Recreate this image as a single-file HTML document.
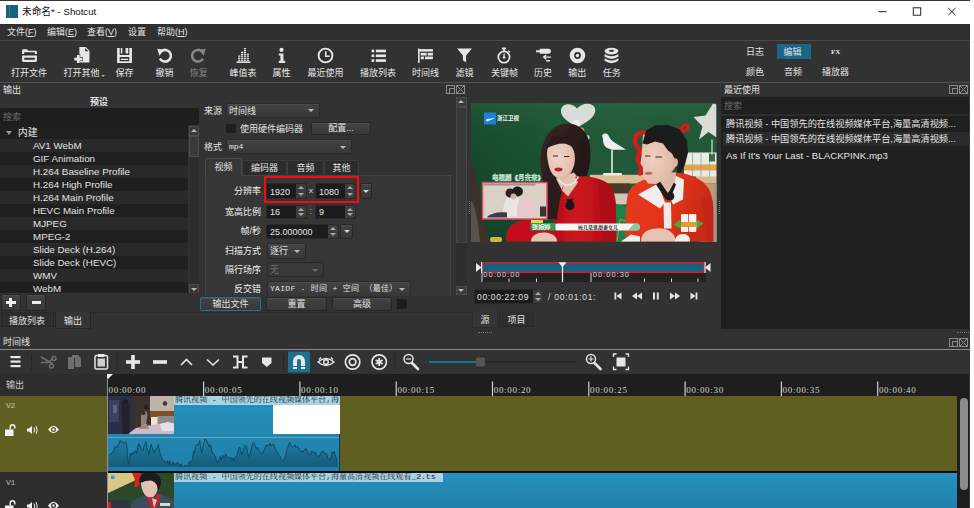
<!DOCTYPE html>
<html lang="zh-CN">
<head>
<meta charset="utf-8">
<title>未命名* - Shotcut</title>
<style>
*{box-sizing:border-box;margin:0;padding:0}
html,body{width:974px;height:508px;overflow:hidden;background:#323232}
body{position:relative;font-family:"Liberation Sans","Noto Sans CJK SC",sans-serif;font-size:9px;color:#e2e2e2;line-height:12px}
.a{position:absolute;white-space:nowrap}
.t{position:absolute;white-space:nowrap;line-height:12px}
.mono{font-family:"Liberation Mono","Noto Sans CJK SC",monospace}
.serif{font-family:"Liberation Serif","Noto Serif CJK SC",serif}
.lab{font-family:"Liberation Mono","Noto Serif CJK SC",serif;font-size:8.1px;color:#1a2a30;letter-spacing:-.05px}
.c{text-align:center}
.r{text-align:right}
.combo{position:absolute;background:linear-gradient(#434343,#373737);border:1px solid #2a2a2a;border-radius:2px;box-shadow:inset 0 1px 0 #4a4a4a}
.combo i{position:absolute;right:5px;top:50%;margin-top:-1px;border:3px solid transparent;border-top:3px solid #bcbcbc;border-bottom:none;width:0;height:0}
.btn{position:absolute;background:linear-gradient(#434343,#373737);border:1px solid #272727;border-radius:2px;box-shadow:inset 0 1px 0 #4c4c4c;text-align:center}
.field{position:absolute;background:#1c1c1c;border:1px solid #2a2a2a;border-radius:2px}
.spin{position:absolute;background:#3d3d3d;border-radius:0 2px 2px 0}
.spin:before{content:"";position:absolute;left:2px;top:2px;border:3px solid transparent;border-bottom:3px solid #aaa;border-top:none}
.spin:after{content:"";position:absolute;left:2px;bottom:2px;border:3px solid transparent;border-top:3px solid #aaa;border-bottom:none}
</style>
</head>
<body>
<!-- title bar -->
<div class="a" style="left:0;top:0;width:974px;height:23.700px;background:#fff"></div>
<div class="a" style="left:0;top:0;width:974px;height:.8px;background:#3a3436"></div>
<div class="a" style="left:6px;top:5px;width:12px;height:13px;background:#14637f"></div>
<div class="a" style="left:9px;top:5px;width:1px;height:13px;background:#56707a"></div>
<div class="t" style="left:22px;top:6px;color:#000;font-size:9.7px;color:#111">未命名* - Shotcut</div>
<svg class="a" style="left:870px;top:0" width="100" height="23" viewBox="870 0 100 23"><g stroke="#222" stroke-width="1" fill="none"><path d="M878.500 11.700h8"/><rect x="913.300" y="7.800" width="7.400" height="7.400"/><path d="M948.300 8l7.200 7.200M955.500 8l-7.200 7.200"/></g></svg>

<!-- menu bar -->
<div class="a" style="left:0;top:23.700px;width:974px;height:17.300px;background:#303030"></div>
<div class="t" style="left:7px;top:26px">文件(<u>F</u>)</div>
<div class="t" style="left:47px;top:26px">编辑(<u>E</u>)</div>
<div class="t" style="left:87px;top:26px">查看(<u>V</u>)</div>
<div class="t" style="left:128px;top:26px">设置</div>
<div class="t" style="left:157px;top:26px">帮助(<u>H</u>)</div>
<div class="a" style="left:0;top:40px;width:974px;height:1px;background:#4a4a4a"></div>

<!-- toolbar -->
<div class="a" style="left:0;top:41px;width:974px;height:41px;background:#323232"></div>
<div class="a" style="left:0;top:82px;width:974px;height:1px;background:#505050"></div>
<div id="tb">
<svg class="a" style="left:20.5px;top:46.5px" width="17" height="17" viewBox="0 0 16 16"><path d="M1 6.5V3.2Q1 2 2.2 2H5.5L7 3.5H13.8Q15 3.5 15 4.7V6.5Z M3 5h10v1.5H3z" fill="#e6e6e6" fill-rule="evenodd"/><path d="M1 8h14v4.8q0 1.2-1.2 1.2H2.2Q1 14 1 12.8Z M3 10h10v2H3z" fill="#e6e6e6" fill-rule="evenodd"/></svg>
<div class="t c" style="left:-1.0px;width:60px;top:66.5px;color:#e6e6e6">打开文件</div>
<svg class="a" style="left:73.0px;top:46.5px" width="17" height="17" viewBox="0 0 16 16"><path d="M6 0h6l3.500 3.500V14.500H6Z M11.500 1v3h3z" fill="#e6e6e6" fill-rule="evenodd"/><path d="M3.700 7.500h2.600v2.500h2.600v2.600H6.300V15H3.700v-2.400H1.200V10h2.500z" fill="#e6e6e6" stroke="#323232" stroke-width="1" paint-order="stroke"/></svg>
<div class="t c" style="left:51.5px;width:60px;top:66.5px;color:#e6e6e6">打开其他</div>
<svg class="a" style="left:116.0px;top:46.5px" width="17" height="17" viewBox="0 0 16 16"><path d="M1 1h2.5v14H1zM12.5 1H15v14h-2.5zM1 7.5h14v2H1zM4.5 1h1.5v5h-1.5zM9 1h2.5v5H9zM4.500 11h7v1.300h-7zM1 13.500h14V15H1z" fill="#e6e6e6"/></svg>
<div class="t c" style="left:94.5px;width:60px;top:66.5px;color:#e6e6e6">保存</div>
<svg class="a" style="left:156.0px;top:46.5px" width="17" height="17" viewBox="0 0 16 16"><path d="M4.960 3.990A5.500 5.500 0 1 1 3.740 10.950" fill="none" stroke="#e6e6e6" stroke-width="2.400"/><path d="M1.200 1.600l6.600 1L3.200 8.200z" fill="#e6e6e6"/></svg>
<div class="t c" style="left:134.5px;width:60px;top:66.5px;color:#e6e6e6">撤销</div>
<svg class="a" style="left:190.3px;top:46.5px" width="17" height="17" viewBox="0 0 16 16"><path d="M11.040 3.990A5.500 5.500 0 1 0 12.260 10.950" fill="none" stroke="#868686" stroke-width="2.400"/><path d="M14.800 1.600l-6.600 1L12.800 8.200z" fill="#868686"/></svg>
<div class="t c" style="left:168.8px;width:60px;top:66.5px;color:#868686">恢复</div>
<svg class="a" style="left:234.5px;top:46.5px" width="17" height="17" viewBox="0 0 16 16"><path d="M1.500 13.500h13V15h-13z" fill="#e6e6e6"/><g fill="#e6e6e6"><rect x="3" y="8" width="2" height="1.200"/><rect x="3" y="10" width="2" height="1.200"/><rect x="3" y="11.800" width="2" height="1.200"/><rect x="5.700" y="4.500" width="2" height="1.200"/><rect x="5.700" y="6.300" width="2" height="1.200"/><rect x="5.700" y="8" width="2" height="1.200"/><rect x="5.700" y="10" width="2" height="1.200"/><rect x="5.700" y="11.800" width="2" height="1.200"/><rect x="8.400" y="1" width="2" height="1.200"/><rect x="8.400" y="2.800" width="2" height="1.200"/><rect x="8.400" y="4.500" width="2" height="1.200"/><rect x="8.400" y="6.300" width="2" height="1.200"/><rect x="8.400" y="8" width="2" height="1.200"/><rect x="8.400" y="10" width="2" height="1.200"/><rect x="8.400" y="11.800" width="2" height="1.200"/><rect x="11.100" y="6.300" width="2" height="1.200"/><rect x="11.100" y="8" width="2" height="1.200"/><rect x="11.100" y="10" width="2" height="1.200"/><rect x="11.100" y="11.800" width="2" height="1.200"/></g></svg>
<div class="t c" style="left:213.0px;width:60px;top:66.5px;color:#e6e6e6">峰值表</div>
<svg class="a" style="left:272.9px;top:46.5px" width="17" height="17" viewBox="0 0 16 16"><circle cx="8" cy="2.800" r="2" fill="#e6e6e6"/><path d="M5.500 6h4.300v7H11.500v2h-6v-2H7V8H5.500z" fill="#e6e6e6"/></svg>
<div class="t c" style="left:251.4px;width:60px;top:66.5px;color:#e6e6e6">属性</div>
<svg class="a" style="left:317.0px;top:46.5px" width="17" height="17" viewBox="0 0 16 16"><circle cx="8" cy="8" r="6.500" fill="none" stroke="#e6e6e6" stroke-width="1.800"/><path d="M7.500 4h1.500v4h3v1.500H7.500z" fill="#e6e6e6"/></svg>
<div class="t c" style="left:295.5px;width:60px;top:66.5px;color:#e6e6e6">最近使用</div>
<svg class="a" style="left:369.5px;top:46.5px" width="17" height="17" viewBox="0 0 16 16"><g fill="#e6e6e6"><rect x="1.500" y="2.500" width="2.500" height="2.500"/><rect x="5.500" y="2.500" width="9.500" height="2.500"/><rect x="1.500" y="7" width="2.500" height="2.500"/><rect x="5.500" y="7" width="9.500" height="2.500"/><rect x="1.500" y="11.500" width="2.500" height="2.500"/><rect x="5.500" y="11.500" width="9.500" height="2.500"/></g></svg>
<div class="t c" style="left:348.0px;width:60px;top:66.5px;color:#e6e6e6">播放列表</div>
<svg class="a" style="left:417.0px;top:46.5px" width="17" height="17" viewBox="0 0 16 16"><g fill="#e6e6e6"><rect x="1" y="1.500" width="1.500" height="13.500"/><rect x="1" y="2" width="14" height="2.300"/><rect x="3.500" y="5.500" width="5.500" height="2.500"/><rect x="10" y="5.500" width="5" height="2.500"/><rect x="3.500" y="9" width="3" height="2.500"/><rect x="7.500" y="9" width="7.500" height="2.500"/></g></svg>
<div class="t c" style="left:395.5px;width:60px;top:66.5px;color:#e6e6e6">时间线</div>
<svg class="a" style="left:456.0px;top:46.5px" width="17" height="17" viewBox="0 0 16 16"><path d="M1 1.500h14L9.500 8v6.500l-3-2V8z" fill="#e6e6e6"/></svg>
<div class="t c" style="left:434.5px;width:60px;top:66.5px;color:#e6e6e6">滤镜</div>
<svg class="a" style="left:496.0px;top:46.5px" width="17" height="17" viewBox="0 0 16 16"><circle cx="7.500" cy="9.500" r="5.300" fill="none" stroke="#e6e6e6" stroke-width="1.600"/><path d="M5.500 0.500h4v1.500h-1.200v2h-1.600v-2H5.500zM7 6h1.200v3.500H7zM12 3l1.500 1.500-1 1L11 4z" fill="#e6e6e6"/><circle cx="7.600" cy="9.800" r="1.200" fill="#e6e6e6"/></svg>
<div class="t c" style="left:474.5px;width:60px;top:66.5px;color:#e6e6e6">关键帧</div>
<svg class="a" style="left:534.5px;top:46.5px" width="17" height="17" viewBox="0 0 16 16"><path d="M1 3h3.500v-1.300H12.500q2.500 0 2.500 2.300T12.500 6.300H4.500V5H1z" fill="#e6e6e6"/><path d="M15 9.500H8.500M10.500 7.500l-2.300 2 2.300 2M14 13H10.500" fill="none" stroke="#e6e6e6" stroke-width="1.300"/></svg>
<div class="t c" style="left:513.0px;width:60px;top:66.5px;color:#e6e6e6">历史</div>
<svg class="a" style="left:568.8px;top:46.5px" width="17" height="17" viewBox="0 0 16 16"><circle cx="8" cy="8" r="7.300" fill="#e6e6e6"/><circle cx="8" cy="8" r="3.200" fill="#323232"/><circle cx="8" cy="8" r="1.600" fill="#e6e6e6"/></svg>
<div class="t c" style="left:547.3px;width:60px;top:66.5px;color:#e6e6e6">输出</div>
<svg class="a" style="left:603.2px;top:46.5px" width="17" height="17" viewBox="0 0 16 16"><ellipse cx="8" cy="3.800" rx="6.500" ry="3.200" fill="#e6e6e6"/><ellipse cx="8" cy="3.600" rx="2.500" ry="1" fill="#323232"/><path d="M1.500 6.500q6.500 4.500 13 0v2.500q-6.500 4.500-13 0zM1.500 10.500q6.500 4.500 13 0V13q-6.500 4.500-13 0z" fill="#e6e6e6"/></svg>
<div class="t c" style="left:581.7px;width:60px;top:66.5px;color:#e6e6e6">任务</div>
<div class="a" style="left:101px;top:74.5px;border:2px solid transparent;border-top:2px solid #aaa;border-bottom:none"></div>
<div class="t" style="left:746px;top:46px">日志</div>
<div class="a" style="left:777px;top:44px;width:34px;height:15px;background:#1a6686"></div>
<div class="t" style="left:783.5px;top:46px">编辑</div>
<div class="t serif" style="left:831px;top:46px;font-size:7px;font-weight:bold">FX</div>
<div class="t" style="left:746px;top:66px">颜色</div>
<div class="t" style="left:784px;top:66px">音频</div>
<div class="t" style="left:822px;top:66px">播放器</div>
</div><!--/tb-->

<!-- SECTIONS -->
<!--EXPORT-->
<div class="t" style="left:3px;top:84px">输出</div>
<svg class="a" style="left:446px;top:85px" width="20" height="10" viewBox="0 0 20 10"><g fill="none" stroke="#8a8a8a" stroke-width="1"><rect x=".5" y=".5" width="8" height="8"/><rect x="3.500" y="3.500" width="5" height="5"/><rect x="10.500" y=".5" width="8" height="8"/><path d="M10.500 .5l8 8M18.500 .5l-8 8"/></g></svg>
<div class="t c" style="left:69px;width:60px;top:96px;font-weight:bold">预设</div>
<div class="a" style="left:0;top:108px;width:199px;height:17px;background:#1e1e1e;border-radius:2px"></div>
<div class="t" style="left:3px;top:111px;color:#6a6a6a">搜索</div>
<div class="a" style="left:0;top:124.500px;width:188px;height:170px;background:#1f1f1f"></div>
<div class="a" style="left:0;top:126px;width:188px;height:13px;background:#1f1f1f"></div>
<div class="t" style="left:18px;top:126.5px;font-size:9.8px">内建</div>
<div class="a" style="left:0;top:139px;width:188px;height:13px;background:#292929"></div>
<div class="t" style="left:33px;top:139.5px;font-size:9.8px">AV1 WebM</div>
<div class="a" style="left:0;top:152px;width:188px;height:13px;background:#1f1f1f"></div>
<div class="t" style="left:33px;top:152.5px;font-size:9.8px">GIF Animation</div>
<div class="a" style="left:0;top:165px;width:188px;height:13px;background:#292929"></div>
<div class="t" style="left:33px;top:165.5px;font-size:9.8px">H.264 Baseline Profile</div>
<div class="a" style="left:0;top:178px;width:188px;height:13px;background:#1f1f1f"></div>
<div class="t" style="left:33px;top:178.5px;font-size:9.8px">H.264 High Profile</div>
<div class="a" style="left:0;top:191px;width:188px;height:13px;background:#292929"></div>
<div class="t" style="left:33px;top:191.5px;font-size:9.8px">H.264 Main Profile</div>
<div class="a" style="left:0;top:204px;width:188px;height:13px;background:#1f1f1f"></div>
<div class="t" style="left:33px;top:204.5px;font-size:9.8px">HEVC Main Profile</div>
<div class="a" style="left:0;top:217px;width:188px;height:13px;background:#292929"></div>
<div class="t" style="left:33px;top:217.5px;font-size:9.8px">MJPEG</div>
<div class="a" style="left:0;top:230px;width:188px;height:13px;background:#1f1f1f"></div>
<div class="t" style="left:33px;top:230.5px;font-size:9.8px">MPEG-2</div>
<div class="a" style="left:0;top:243px;width:188px;height:13px;background:#292929"></div>
<div class="t" style="left:33px;top:243.5px;font-size:9.8px">Slide Deck (H.264)</div>
<div class="a" style="left:0;top:256px;width:188px;height:13px;background:#1f1f1f"></div>
<div class="t" style="left:33px;top:256.5px;font-size:9.8px">Slide Deck (HEVC)</div>
<div class="a" style="left:0;top:269px;width:188px;height:13px;background:#292929"></div>
<div class="t" style="left:33px;top:269.5px;font-size:9.8px">WMV</div>
<div class="a" style="left:0;top:282px;width:188px;height:13px;background:#1f1f1f"></div>
<div class="t" style="left:33px;top:282.5px;font-size:9.8px">WebM</div>
<div class="a" style="left:6px;top:131px;border:3px solid transparent;border-top:4px solid #9a9a9a;border-bottom:none"></div>
<div class="a" style="left:188.500px;top:125.500px;width:10.500px;height:168px;background:#2d2d2d"></div>
<div class="a" style="left:188.500px;top:126px;width:10.500px;height:9.500px;background:#3a3a3a;border:1px solid #4c4c4c"></div>
<div class="a" style="left:190.800px;top:129px;border:3px solid transparent;border-bottom:3px solid #bbb;border-top:none"></div>
<div class="a" style="left:188.500px;top:136.300px;width:10.500px;height:21px;background:#3a3a3a;border:1px solid #4c4c4c"></div>
<div class="a" style="left:188.500px;top:284px;width:10.500px;height:9.500px;background:#3a3a3a;border:1px solid #4c4c4c"></div>
<div class="a" style="left:190.800px;top:287.500px;border:3px solid transparent;border-top:3px solid #bbb;border-bottom:none"></div>
<div class="a" style="left:0;top:293px;width:199px;height:20px;background:#323232"></div>
<div class="btn" style="left:1px;top:294px;width:19.500px;height:17px"></div>
<div class="a" style="left:6px;top:301px;width:9.500px;height:3px;background:#eee"></div><div class="a" style="left:9.200px;top:297.800px;width:3px;height:9.500px;background:#eee"></div>
<div class="btn" style="left:26px;top:294px;width:20px;height:17px"></div>
<div class="a" style="left:31.500px;top:301px;width:9.500px;height:3px;background:#eee"></div>
<div class="a" style="left:0;top:312px;width:470px;height:1px;background:#2a2a2a"></div>
<div class="a" style="left:1px;top:313px;width:53px;height:14px;background:#2e2e2e;border:1px solid #262626;border-top:none"></div>
<div class="t" style="left:9px;top:315px">播放列表</div>
<div class="a" style="left:55px;top:312px;width:36px;height:17px;background:#353535;border:1px solid #262626;border-top:none"></div>
<div class="t" style="left:64px;top:315px">输出</div>
<div class="t" style="left:204px;top:104.700px">来源</div>
<div class="combo" style="left:226px;top:102.500px;width:94px;height:15.500px"><i></i></div>
<div class="t" style="left:229px;top:104.500px">时间线</div>
<div class="a" style="left:225.500px;top:123.500px;width:10px;height:9.500px;background:#1d1d1d;border-radius:1px"></div>
<div class="t" style="left:240px;top:123px">使用硬件编码器</div>
<div class="btn" style="left:311px;top:122px;width:60px;height:13px"></div>
<div class="t c" style="left:311px;width:60px;top:122px">配置...</div>
<div class="t" style="left:204px;top:141px">格式</div>
<div class="combo" style="left:226px;top:139px;width:126px;height:15px"><i></i></div>
<div class="t mono" style="left:229px;top:141px;font-size:8px">mp4</div>
<div class="a" style="left:205px;top:175px;width:246px;height:121px;background:#363636;border:1px solid #444;border-bottom:none"></div>
<div class="a" style="left:205px;top:158px;width:37px;height:18px;background:#363636;border:1px solid #4a4a4a;border-bottom:none;border-radius:2px 2px 0 0"></div>
<div class="t c" style="left:205px;width:37px;top:161px">视频</div>
<div class="a" style="left:242px;top:160px;width:45px;height:15px;background:#2c2c2c;border:1px solid #3c3c3c;border-bottom:none;border-radius:2px 2px 0 0"></div>
<div class="t c" style="left:242px;width:45px;top:162px">编码器</div>
<div class="a" style="left:287px;top:160px;width:37px;height:15px;background:#2c2c2c;border:1px solid #3c3c3c;border-bottom:none;border-radius:2px 2px 0 0"></div>
<div class="t c" style="left:287px;width:37px;top:162px">音频</div>
<div class="a" style="left:324px;top:160px;width:35px;height:15px;background:#2c2c2c;border:1px solid #3c3c3c;border-bottom:none;border-radius:2px 2px 0 0"></div>
<div class="t c" style="left:324px;width:35px;top:162px">其他</div>
<div class="t r" style="left:190px;width:71px;top:185px;color:#f0f0f0">分辨率</div>
<div class="field" style="left:266px;top:183px;width:41px;height:16px"></div>
<div class="spin" style="left:296px;top:184px;width:10px;height:14px"></div>
<div class="t" style="left:270px;top:185.5px;font-size:9px">1920</div>
<div class="t mono" style="left:308.500px;top:185px;font-size:8px">x</div>
<div class="field" style="left:315px;top:183px;width:41px;height:16px"></div>
<div class="spin" style="left:345px;top:184px;width:10px;height:14px"></div>
<div class="t" style="left:319px;top:185.5px;font-size:9px">1080</div>
<div class="btn" style="left:360px;top:183px;width:12px;height:16px"></div><div class="a" style="left:363px;top:190px;border:3px solid transparent;border-top:3px solid #d0d0d0;border-bottom:none"></div>
<div class="a" style="left:264.300px;top:176.300px;width:94.500px;height:27.200px;border:2.200px solid #f60a10"></div>
<div class="t r" style="left:190px;width:71px;top:206px;color:#f0f0f0">宽高比例</div>
<div class="field" style="left:266px;top:205px;width:41px;height:14px"></div>
<div class="spin" style="left:296px;top:206px;width:10px;height:12px"></div>
<div class="t" style="left:270px;top:205.8px;font-size:9px">16</div>
<div class="t" style="left:309.500px;top:205px;color:#aaa">:</div>
<div class="field" style="left:315px;top:205px;width:41px;height:14px"></div>
<div class="spin" style="left:345px;top:206px;width:10px;height:12px"></div>
<div class="t" style="left:319px;top:205.8px;font-size:9px">9</div>
<div class="t r" style="left:190px;width:71px;top:225px;color:#f0f0f0">帧/秒</div>
<div class="field" style="left:266px;top:224px;width:73px;height:15px"></div>
<div class="spin" style="left:328px;top:225px;width:10px;height:13px"></div>
<div class="t" style="left:270px;top:226.0px;font-size:9px">25.000000</div>
<div class="btn" style="left:340px;top:224px;width:13px;height:15px"></div><div class="a" style="left:343.500px;top:230px;border:3px solid transparent;border-top:3px solid #d0d0d0;border-bottom:none"></div>
<div class="t r" style="left:190px;width:71px;top:245px;color:#f0f0f0">扫描方式</div>
<div class="combo" style="left:267px;top:243px;width:39px;height:16px"><i></i></div>
<div class="t" style="left:270px;top:245px">逐行</div>
<div class="t r" style="left:190px;width:71px;top:264px;color:#f0f0f0">隔行场序</div>
<div class="combo" style="left:267px;top:262px;width:57px;height:15px;background:#383838;box-shadow:none"><i style="border-top-color:#6a6a6a"></i></div>
<div class="t" style="left:270px;top:264px;color:#6e6e6e">无</div>
<div class="t r" style="left:190px;width:71px;top:283px;color:#f0f0f0">反交错</div>
<div class="combo" style="left:267px;top:281px;width:144px;height:15px;border-bottom:none"><i></i></div>
<div class="t mono" style="left:270px;top:283px;font-size:8px;letter-spacing:.3px">YAIDF - 时间 + 空间 （最佳）</div>
<div class="a" style="left:456px;top:97px;width:10.500px;height:198px;background:#2e2e2e"></div>
<div class="a" style="left:456px;top:97px;width:10.500px;height:9.500px;background:#3a3a3a;border:1px solid #4c4c4c"></div>
<div class="a" style="left:458.300px;top:100px;border:3px solid transparent;border-bottom:3px solid #bbb;border-top:none"></div>
<div class="a" style="left:456px;top:107.300px;width:10.500px;height:136px;background:#383838;border:1px solid #474747"></div>
<div class="a" style="left:456px;top:285.500px;width:10.500px;height:9.500px;background:#3a3a3a;border:1px solid #4c4c4c"></div>
<div class="a" style="left:458.300px;top:289px;border:3px solid transparent;border-top:3px solid #bbb;border-bottom:none"></div>
<div class="a" style="left:199px;top:296px;width:258px;height:16px;background:#323232"></div>
<div class="btn" style="left:200px;top:297px;width:61px;height:14px;border-color:#2c6e8e"></div><div class="t c" style="left:200px;width:61px;top:298px">输出文件</div>
<div class="btn" style="left:266px;top:297px;width:61px;height:14px"></div><div class="t c" style="left:266px;width:61px;top:298px">重置</div>
<div class="btn" style="left:332px;top:297px;width:60px;height:14px"></div><div class="t c" style="left:332px;width:60px;top:298px">高级</div>
<div class="a" style="left:397px;top:299px;width:10px;height:10px;background:#1d1d1d;border-radius:1px"></div>
<!--/EXPORT-->
<!--PLAYER-->

<svg class="a" style="left:471px;top:102.5px" width="245.5" height="139" viewBox="471 102.5 245.5 139" preserveAspectRatio="none">
<defs>
<linearGradient id="gbg" x1="0" x2="1" y1="0" y2="0"><stop offset="0" stop-color="#15462b"/><stop offset=".3" stop-color="#1b5233"/><stop offset=".6" stop-color="#215a3a"/><stop offset="1" stop-color="#205838"/></linearGradient>
<linearGradient id="gbg2" x1="0" x2="0" y1="0" y2="1"><stop offset="0" stop-color="#2f6a45" stop-opacity=".45"/><stop offset=".5" stop-color="#1c4d30" stop-opacity="0"/><stop offset="1" stop-color="#0e2e1c" stop-opacity=".35"/></linearGradient>
<radialGradient id="fw" cx=".4" cy=".45" r=".7"><stop offset="0" stop-color="#f1d3c6"/><stop offset=".7" stop-color="#e6c1b2"/><stop offset="1" stop-color="#cfa392"/></radialGradient>
<radialGradient id="fm" cx=".35" cy=".5" r=".75"><stop offset="0" stop-color="#efcfbf"/><stop offset=".7" stop-color="#e3bcaa"/><stop offset="1" stop-color="#c99c88"/></radialGradient>
<linearGradient id="dr" x1="0" x2="1" y1="0" y2="0"><stop offset="0" stop-color="#b10e18"/><stop offset=".35" stop-color="#cc1520"/><stop offset=".75" stop-color="#bd101a"/><stop offset="1" stop-color="#8f0a12"/></linearGradient>
<linearGradient id="jk" x1="0" x2="1" y1="0" y2=".3"><stop offset="0" stop-color="#e43a1e"/><stop offset=".55" stop-color="#e23419"/><stop offset="1" stop-color="#c92a14"/></linearGradient>
<linearGradient id="hr" x1="0" x2="1" y1="0" y2="1"><stop offset="0" stop-color="#3a2824"/><stop offset=".5" stop-color="#281a18"/><stop offset="1" stop-color="#1e1412"/></linearGradient>
<filter id="b1" x="-10%" y="-10%" width="120%" height="120%"><feGaussianBlur stdDeviation=".7"/></filter>
<filter id="b2" x="-10%" y="-10%" width="120%" height="120%"><feGaussianBlur stdDeviation="1.400"/></filter>
<clipPath id="vc"><rect x="471" y="102.5" width="245.5" height="139"/></clipPath>
</defs>
<g clip-path="url(#vc)">
<rect x="471" y="102" width="246" height="140" fill="url(#gbg)"/>
<rect x="471" y="102" width="246" height="140" fill="url(#gbg2)"/>
<g filter="url(#b1)">
<!-- table & shelf -->
<rect x="590" y="174.300" width="58" height="8.700" fill="#dcbc92"/>
<rect x="606" y="183" width="24" height="11" fill="#4a3a2a"/>
<rect x="611" y="193" width="18" height="11" fill="#cfc6b8"/>
<rect x="696" y="175" width="21" height="8" fill="#d9b88e"/>
<rect x="700" y="183" width="17" height="58" fill="#c49a70"/>
<!-- cushion -->
<path d="M612 202l17 5v35h-17z" fill="#1f8248"/>
<path d="M617 241l3-22 9 2" fill="none" stroke="#d08a3a" stroke-width="1"/>
<!-- cartons top right -->
<rect x="684" y="152" width="33" height="24" fill="#e9ebe6"/>
<rect x="684" y="164" width="33" height="6" fill="#e3a54a"/>
<path d="M692.500 152v24M701 152v24M709.500 152v24" stroke="#9aa49a" stroke-width=".8"/>
<rect x="709" y="153" width="6" height="8" fill="#3d6a48"/>
<!-- star -->
<path d="M712 139V154" stroke="#e0e0dc" stroke-width="1.200"/>
<path d="M713 103l3.500 1v33l-8-5.500-9.500 7.500 3.500-13-9-9.500 12-1.500z" fill="#dcdcd6"/>
<!-- heart -->
<path d="M577.500 127c-8-5-17.500-10-16.500-17.500 1-6.500 10-8 16-1.500 5-6 16-6.500 18 0 2 8-9 14-17.500 19z" fill="#d9ddd8"/>
<circle cx="576" cy="123.500" r="4" fill="#eceeee"/>
<circle cx="581" cy="130.500" r="3.400" fill="#c9a64e"/>
<ellipse cx="585.500" cy="137" rx="4" ry="2.800" fill="#e8eaea"/>
<!-- bird -->
<path d="M602 135c2-3 6-2.500 7 1 2 5 9 8 17 13-9 .5-19 1.500-22-5-1.500-3-.5-6-2-9z" fill="#eef0ee"/>
<path d="M612 149v24" stroke="#e8eae8" stroke-width="1.600"/>
<rect x="603" y="172.500" width="19" height="2.500" rx="1" fill="#e8eae8"/>
<!-- red curly deco -->
<path d="M646 132c-8-1-12 4-11 10 1 5 6 6 5 10-1 3-4 4-2 8 1 3 4 4 3 8-.5 2-2 3-1 5" fill="none" stroke="#d81a1e" stroke-width="4.400" stroke-linecap="round"/>
<path d="M679 131c2-6 9-9 9-4.500 0 3-5 5-9 5.500" fill="none" stroke="#d81a1e" stroke-width="3" stroke-linecap="round"/>
<!-- left dark object -->
<path d="M471 163c3 2 5 10 7 22 3 18 7 36 11 57h-18z" fill="#3a322c"/>
<path d="M471 200c4 4 7 18 9 42h-9z" fill="#5a524a"/>
<rect x="490" y="236.500" width="12" height="5" rx="2" fill="#c9b83a"/>
</g>
<!-- WOMAN -->
<g filter="url(#b1)">
<path d="M541 170c-2-18 2-40 20-46 15-4 27 5 29 21 1 12 0 24-4 32l-10 5-12 3c0 12-1 24-3 34l-13-1c1-14-5-32-7-48z" fill="url(#hr)"/>
<path d="M556 178l18-6 6 8-6 12-10 2z" fill="#e3bfb1"/>
<path d="M547 152c1-9 7-13 15-12 8 1 13 8 13 18 0 9-5 18-11 20-7 2-13-4-15-12-1-5-2-9-2-14z" fill="url(#fw)"/>
<path d="M546 148c2-10 11-15 20-13 7 2 11 9 11 17-3-5-7-8-13-9-7 0-12 2-18 5z" fill="#2b1d1b"/>
<ellipse cx="558.500" cy="169" rx="4" ry="1.900" fill="#b4202a"/>
<path d="M553 155.500h5M564 156h5.500" stroke="#3a2622" stroke-width="1"/>
<!-- dress -->
<path d="M561 190c3-8 9-13 16-14 10-1 22 1 31 7 7 6 9 20 8 58h-62c-2-10-1-22 1-32 1-7 3-13 6-19z" fill="url(#dr)"/>
<path d="M506 241c-1-10 4-19 16-21 12-1 26 2 32 8l4 13z" fill="#c3111b"/>
<path d="M598 179c11 2 18 10 18 29v33h-14z" fill="#ad0e18"/>
<path d="M562 190l6 6 10-14-3-6-10 4z" fill="#e3c0b2"/>
<path d="M558.500 179c3 5 9 8 16 3l4-6" fill="none" stroke="#ece8e4" stroke-width="1.500"/>
<path d="M547 172c6 8 12 14 15 20-3 8-4 18-5 27l-11-1c2-14 0-30 1-46z" fill="#2b1d1b"/>
<circle cx="570" cy="205" r="4.600" fill="#1c1618"/>
<path d="M566 199l4 5 4-6z" fill="#1c1618"/>
<path d="M531 241c0-6 6-9.500 14-9 7 .5 12 4 12 9z" fill="#e6c3b5"/>
</g>
<!-- MAN -->
<g filter="url(#b1)">
<path d="M626 241c-1-16-1-34 2-48 3-7 8-10 14-13l14-5 16-3 12 1c12 3 22 8 26 18 4 10 5 30 5 50z" fill="url(#jk)"/>
<path d="M700 200c4 10 6 26 6 41h9c0-18 0-34-4-46z" fill="#c42814"/>
<path d="M638 194l20-11 7 19-5 6zM675 175l9 4-1 20-10 5-4-9z" fill="#f0eeed"/>
<path d="M663.500 202h7.500l.5 26h-7.500z" fill="#eceaea"/>
<path d="M657 172h19l-1 12-8 10-9-10z" fill="#dfb9a8"/>
<path d="M656 184l4-3 8 12 6-11 2 2-6 15h-4z" fill="#1b1b1d"/>
<circle cx="670" cy="195.800" r="4.300" fill="#1b1b1d"/>
<!-- face -->
<path d="M643 134l-1.500 21-1 8 2.500 4v9l5 7 8 .5 12-6.500 7-10 1-8-2-22z" fill="url(#fm)"/>
<path d="M642.500 143l3.500-13 9-5 13-.5 12 4.500 7 11 1 12-3 12-4 8-4 0-1-11-4-8-4-3-5-7-8-2-8 3z" fill="#1a1a1c"/>
<ellipse cx="675.300" cy="162" rx="2.600" ry="4.200" fill="#dcb3a0"/>
<path d="M645 155.500h5.500M655.500 156.500h6.500" stroke="#3a2a24" stroke-width="1.100"/>
<ellipse cx="648.500" cy="172.800" rx="3.800" ry="1.500" fill="#c46464"/>
<!-- hands -->
<path d="M641 241c0-8 6-13 16-13 10-1 18 4 19 13z" fill="#e6c2b2"/>
<path d="M675 241c0-5 4-8 9-7.500 4 .5 6 3 6 7.500z" fill="#f0f0f0"/>
<path d="M621 241l10-7 9 2v5z" fill="#f0f0f0"/>
<!-- product overlay -->
<path d="M673.500 224l6.500-5 2 10zM703.500 223l-7-4-1 10z" fill="#48a642"/>
<rect x="681" y="213.500" width="7.300" height="18" rx="1" fill="#f3f3ee"/>
<rect x="689" y="213.500" width="7.300" height="18" rx="1" fill="#f3f3ee"/>
<rect x="681" y="221.500" width="15.300" height="5" fill="#e79a32"/>
</g>
<rect x="713.500" y="183" width="3.500" height="59" fill="#a8968e" filter="url(#b1)"/>
<!-- logo -->
<rect x="484" y="112" width="12" height="12" fill="#1f80d8"/>
<path d="M485.500 119.500c3-2 5-.5 9-2.500-2 3-5 2-7 4z" fill="#fff"/>
<text x="497" y="119.800" font-size="5.500" font-weight="bold" fill="#f4f4f4" font-family="'Liberation Sans','Noto Sans CJK SC',sans-serif">浙江卫视</text>
<!-- caption & inset -->
<text x="492" y="179.500" font-size="6.500" font-weight="bold" fill="#39b36a" stroke="#eaf6ee" stroke-width=".35" font-family="'Liberation Sans','Noto Sans CJK SC',sans-serif">电视剧《月去来》</text>
<g filter="url(#b1)">
<rect x="482.500" y="182" width="64.500" height="36.500" fill="#d9d1c6" stroke="#e2466a" stroke-width="1.500"/>
<rect x="483.500" y="183" width="52" height="2" fill="#9a9490"/>
<path d="M503 216c0-12 2-20 8-22 4-1 7 2 8 6l2 16z" fill="#e8e6e4"/>
<path d="M517 216c-1-10 2-18 9-19 6 0 9 6 10 19z" fill="#e8c8cc"/>
<ellipse cx="510" cy="192.500" rx="4.500" ry="4.500" fill="#2a2422"/>
<ellipse cx="517.500" cy="191" rx="5.500" ry="5" fill="#1f1b1b"/>
<ellipse cx="513.500" cy="196" rx="3" ry="3" fill="#d9b09e"/>
<path d="M487 217c2-4 12-6 20-5v5z" fill="#3a3a4a"/>
<rect x="540" y="206" width="6" height="10" fill="#3a3432"/>
</g>
<!-- name tag & bar -->
<rect x="531" y="219.500" width="12" height="3" fill="#e8d44a"/>
<rect x="554" y="223" width="86" height="7" rx="3.500" fill="#f6f6f6"/>
<path d="M634 223h3q3 0 3 3.500t-3 3.500h-9z" fill="#4aa85a" opacity=".6"/>
<rect x="530.500" y="222.500" width="25" height="7.500" fill="#2f9a52"/>
<text x="532" y="228.800" font-size="6.200" font-weight="bold" fill="#f2fff4" font-family="'Liberation Sans','Noto Sans CJK SC',sans-serif">张婉婷</text>
<text x="578" y="228.600" font-size="5" font-weight="bold" fill="#222" font-family="'Liberation Serif','Noto Serif CJK SC',serif">婉儿是谁甜蜜女儿</text>
</g>
</svg>

<svg class="a" style="left:470px;top:258px" width="250" height="28" viewBox="470 258 250 28"><rect x="481.500" y="272.500" width="224.500" height="9.500" fill="#232323"/><rect x="482.300" y="262.700" width="222" height="9.600" fill="#1a5f7f" stroke="#e81a1f" stroke-width="1.300"/><path d="M476 263l5.500 4.500-5.500 4.500z" fill="#e8e8e8"/><rect x="481" y="262" width="1.200" height="11" fill="#e8e8e8"/><path d="M710.500 263l-5.500 4.500 5.500 4.500z" fill="#e8e8e8"/><rect x="704.500" y="262" width="1.200" height="11" fill="#e8e8e8"/><g stroke="#d8d8d8" stroke-width="1"><path d="M482 273v9M591 273v9M509 278.500v3.500M536.500 278.500v3.500M644.500 278.500v3.500M671.500 278.500v3.500M698 278.500v3.500"/></g><path d="M558.500 262.200h8l-4 5z" fill="#f0f0f0"/><rect x="561.900" y="264" width="1.200" height="18" fill="#f0f0f0"/><text x="483.300" y="277.300" font-size="7.500" fill="#d8d8d8" font-family="'Liberation Sans',sans-serif" letter-spacing="1">00:00:00</text><text x="592.800" y="277.300" font-size="7.500" fill="#d8d8d8" font-family="'Liberation Sans',sans-serif" letter-spacing="1">00:00:30</text></svg>
<div class="field" style="left:474px;top:289px;width:68px;height:15px"></div>
<div class="spin" style="left:532.500px;top:290px;width:9px;height:13px"></div>
<div class="t" style="left:477px;top:290.500px;font-size:8.500px;letter-spacing:.65px">00:00:22:09</div>
<div class="t" style="left:548px;top:290.500px;font-size:8.500px;letter-spacing:.75px;color:#ddd">/ 00:01:01:</div>
<svg class="a" style="left:610px;top:290px" width="95" height="12" viewBox="610 290 95 12"><g fill="#e4e4e4"><rect x="614.500" y="292.500" width="1.800" height="7"/><path d="M621.500 292.500v7l-5-3.500z"/><path d="M637 292.500v7l-5-3.500zM642 292.500v7l-5-3.500z"/><rect x="653" y="292.500" width="2" height="7"/><rect x="656.800" y="292.500" width="2" height="7"/><path d="M670 292.500v7l5-3.500zM675 292.500v7l5-3.500z"/><path d="M690.500 292.500v7l5-3.500z"/><rect x="695.600" y="292.500" width="1.800" height="7"/></g></svg>
<div class="a" style="left:472px;top:311px;width:26px;height:17px;background:#353535;border:1px solid #2a2a2a;border-top:none"></div>
<div class="t c" style="left:472px;width:26px;top:314px">源</div>
<div class="a" style="left:499px;top:312px;width:35px;height:15px;background:#2e2e2e;border:1px solid #282828;border-top:none"></div>
<div class="t c" style="left:499px;width:35px;top:314px">项目</div>
<div class="a" style="left:478px;top:331.500px;width:14px;height:0;border-top:1px dotted #777"></div>
<div class="a splitdots" style="left:468.500px;top:201px;width:0;height:13px;border-left:1px dotted #777"></div>
<div class="a splitdots" style="left:718.500px;top:201px;width:0;height:13px;border-left:1px dotted #777"></div>
<div class="a" style="left:957px;top:331.500px;width:12px;height:0;border-top:1px dotted #777"></div>
<!--/PLAYER-->
<!--RECENT-->
<div class="t" style="left:724px;top:84px">最近使用</div>
<svg class="a" style="left:949px;top:85px" width="20" height="10" viewBox="0 0 20 10"><g fill="none" stroke="#8a8a8a" stroke-width="1"><rect x=".5" y=".5" width="8" height="8"/><rect x="3.500" y="3.500" width="5" height="5"/><rect x="10.500" y=".5" width="8" height="8"/><path d="M10.500 .5l8 8M18.500 .5l-8 8"/></g></svg>
<div class="a" style="left:721px;top:97px;width:248px;height:232px;background:#1f1f1f"></div>
<div class="a" style="left:721px;top:113.5px;width:248px;height:2.5px;background:#2c2c2c"></div>
<div class="t" style="left:724px;top:100px;color:#6a6a6a">搜索</div>
<div class="a" style="left:723px;top:132px;width:246px;height:14px;background:#2b2b2b"></div>
<div class="t" style="left:726px;top:117.500px;font-size:9.2px">腾讯视频 - 中国领先的在线视频媒体平台,海量高清视频...</div>
<div class="t" style="left:726px;top:133px;font-size:9.2px">腾讯视频 - 中国领先的在线视频媒体平台,海量高清视频...</div>
<div class="t" style="left:726px;top:150px;font-size:9.700px">As If It's Your Last - BLACKPINK.mp3</div>
<svg class="a" style="left:949px;top:338px" width="20" height="10" viewBox="0 0 20 10"><g fill="none" stroke="#8a8a8a" stroke-width="1"><rect x=".5" y=".5" width="8" height="8"/><rect x="3.500" y="3.500" width="5" height="5"/><rect x="10.500" y=".5" width="8" height="8"/><path d="M10.500 .5l8 8M18.500 .5l-8 8"/></g></svg>
<!--/RECENT-->
<!--TIMELINE-->
<div class="t" style="left:3px;top:336px">时间线</div>
<div class="a" style="left:0;top:349px;width:970px;height:1px;background:#8a8a8a"></div>
<div class="a" style="left:0;top:350px;width:970px;height:24px;background:#323232"></div>
<svg class="a" style="left:0;top:350px" width="640" height="24" viewBox="0 350 640 24">
<g fill="#e6e6e6"><rect x="10.500" y="356" width="10" height="2.200"/><rect x="10.500" y="360.500" width="10" height="2.200"/><rect x="10.500" y="365" width="10" height="2.200"/></g>
<path d="M31.500 354v16M117 354v16M283.500 354v16M395 354v16" stroke="#262626" stroke-width="1"/>
<g fill="none" stroke="#6e6e6e" stroke-width="1.500"><path d="M41 357l12 7M41 362.500h7l5-4"/><circle cx="51.500" cy="366" r="2"/><circle cx="54" cy="358.500" r="2"/></g>
<g fill="#6e6e6e"><path d="M68 357h6v12h-6zM72 355h6l3 3v9h-6v-9h-3z"/></g>
<g><rect x="95" y="355.500" width="12.500" height="13.500" rx="1.500" fill="none" stroke="#e6e6e6" stroke-width="1.500"/><rect x="98" y="354" width="6.500" height="3" fill="#e6e6e6"/><rect x="97.500" y="358.500" width="7.500" height="8" fill="#cfcfcf"/></g>
<g fill="#e6e6e6"><rect x="126" y="360.200" width="14" height="3.600"/><rect x="131.200" y="355" width="3.600" height="14"/><rect x="153" y="360.200" width="14" height="3.600"/></g>
<g fill="none" stroke="#e6e6e6" stroke-width="1.600"><path d="M181 365l5.500-5.500 5.500 5.500M207 359.500l6 5.500 6-5.500"/></g>
<g fill="none" stroke="#e6e6e6" stroke-width="2"><path d="M233 356.500h4.500v11h-4.500M247.500 356.500h-4.500v11h4.500M237 362h6.500"/></g>
<path d="M262 357.500h9.500v5.500l-4.700 4-4.800-4z" fill="#e6e6e6"/>
<rect x="288" y="351.500" width="22" height="21" fill="#1f6f90"/>
<path d="M293 369v-8a6 6 0 0 1 12 0v8h-4v-8a2 2 0 0 0-4 0v8z" fill="#e6e6e6"/><path d="M293 366.500h4M301 366.500h4" stroke="#1f6f90" stroke-width="1"/>
<g fill="none" stroke="#e6e6e6" stroke-width="1.400"><path d="M318 362q8-7 16 0-8 7-16 0z"/><circle cx="326" cy="362" r="2.300"/><path d="M321 357.500l-2 2M331 357.500l2 2"/></g>
<g fill="none" stroke="#e6e6e6" stroke-width="1.700"><circle cx="352.600" cy="362" r="7.200"/><circle cx="352.600" cy="362" r="3.300"/><circle cx="379.200" cy="362" r="7.200"/></g>
<g stroke="#e6e6e6" stroke-width="1.800"><path d="M379.200 358v8M375.700 360l7 4M375.700 364l7-4"/></g>
<g fill="none" stroke="#e6e6e6"><circle cx="408.500" cy="359" r="4.500" stroke-width="1.500"/><path d="M412 363l6 6" stroke-width="2.600" stroke-linecap="round"/><path d="M406 359h5" stroke-width="1.200"/></g>
<rect x="429" y="361" width="48" height="2" fill="#1a6f96"/><rect x="484" y="361" width="92" height="2" fill="#262626"/><rect x="476" y="357.500" width="9" height="9" rx="1.500" fill="#555"/>
<g fill="none" stroke="#e6e6e6"><circle cx="591" cy="359" r="4.500" stroke-width="1.500"/><path d="M594.500 363l6 6" stroke-width="2.600" stroke-linecap="round"/><path d="M588.500 359h5M591 356.500v5" stroke-width="1.200"/></g>
<rect x="616.500" y="357.500" width="9" height="9" fill="#e6e6e6"/><g fill="none" stroke="#e6e6e6" stroke-width="1.300"><path d="M613.500 357v-3h3M625.500 354h3v3M628.500 366.500v3h-3M616.500 369.500h-3v-3"/></g>
</svg>
<div class="a" style="left:0;top:374px;width:107px;height:22px;background:#2d2d2d"></div>
<div class="t" style="left:6px;top:379px;color:#c8c8c8">输出</div>
<div class="a" style="left:107px;top:374px;width:862px;height:22px;background:#1e1e1e"></div>
<svg class="a" style="left:0;top:374px" width="969" height="22" viewBox="0 374 969 22"><text x="108.5" y="393" font-size="9" fill="#d4d4d4" letter-spacing=".7" font-family="'Liberation Serif',serif">00:00:00</text><rect x="203.0" y="381.500" width="1.200" height="14.500" fill="#d0d0d0"/><text x="204.8" y="393" font-size="9" fill="#d4d4d4" letter-spacing=".7" font-family="'Liberation Serif',serif">00:00:05</text><rect x="299.3" y="381.500" width="1.200" height="14.500" fill="#d0d0d0"/><text x="301.1" y="393" font-size="9" fill="#d4d4d4" letter-spacing=".7" font-family="'Liberation Serif',serif">00:00:10</text><rect x="395.6" y="381.500" width="1.200" height="14.500" fill="#d0d0d0"/><text x="397.4" y="393" font-size="9" fill="#d4d4d4" letter-spacing=".7" font-family="'Liberation Serif',serif">00:00:15</text><rect x="491.9" y="381.500" width="1.200" height="14.500" fill="#d0d0d0"/><text x="493.7" y="393" font-size="9" fill="#d4d4d4" letter-spacing=".7" font-family="'Liberation Serif',serif">00:00:20</text><rect x="588.2" y="381.500" width="1.200" height="14.500" fill="#d0d0d0"/><text x="590.0" y="393" font-size="9" fill="#d4d4d4" letter-spacing=".7" font-family="'Liberation Serif',serif">00:00:25</text><rect x="684.5" y="381.500" width="1.200" height="14.500" fill="#d0d0d0"/><text x="686.3" y="393" font-size="9" fill="#d4d4d4" letter-spacing=".7" font-family="'Liberation Serif',serif">00:00:30</text><rect x="780.8" y="381.500" width="1.200" height="14.500" fill="#d0d0d0"/><text x="782.6" y="393" font-size="9" fill="#d4d4d4" letter-spacing=".7" font-family="'Liberation Serif',serif">00:00:35</text><rect x="877.1" y="381.500" width="1.200" height="14.500" fill="#d0d0d0"/><text x="878.9" y="393" font-size="9" fill="#d4d4d4" letter-spacing=".7" font-family="'Liberation Serif',serif">00:00:40</text><path d="M107 374h6l-6 6z" fill="#eee"/></svg>
<div class="a" style="left:0;top:396px;width:957px;height:76px;background:#5f5f22"></div>
<div class="a" style="left:0;top:472px;width:107px;height:36px;background:#2d2d2d"></div>
<div class="t mono" style="left:6px;top:399.500px;color:#c4c4a8;font-size:8px;letter-spacing:-.3px">V2</div>
<div class="t mono" style="left:6px;top:476.500px;color:#b8b8b8;font-size:8px;letter-spacing:-.3px">V1</div>
<svg class="a" style="left:4px;top:423px" width="58" height="14" viewBox="4 0 58 14"><g fill="#f0f0f0"><rect x="5" y="6.500" width="8.500" height="6.500"/><path d="M9.500 6.500V4a3 3 0 0 1 6 0v1.500h-1.500V4a1.500 1.500 0 0 0-3 0v2.500z"/><path d="M27 5.500h2l3-2.500v8l-3-2.500h-2z"/></g><g fill="none" stroke="#f0f0f0" stroke-width="1"><path d="M34 4.500q1.500 2.500 0 5M36 3q2.500 4 0 8"/></g><path d="M48 6.500q5.500-7.400 11 0-5.500 7.400-11 0z" fill="#f0f0f0"/><circle cx="53.500" cy="6.500" r="2.500" fill="#5f5f22"/><circle cx="53.500" cy="6.500" r="1.200" fill="#f0f0f0"/></svg>
<svg class="a" style="left:4px;top:498.5px" width="58" height="14" viewBox="4 0 58 14"><g fill="#f0f0f0"><rect x="5" y="6.500" width="8.500" height="6.500"/><path d="M9.500 6.500V4a3 3 0 0 1 6 0v1.500h-1.500V4a1.500 1.500 0 0 0-3 0v2.500z"/><path d="M27 5.500h2l3-2.500v8l-3-2.500h-2z"/></g><g fill="none" stroke="#f0f0f0" stroke-width="1"><path d="M34 4.500q1.500 2.500 0 5M36 3q2.500 4 0 8"/></g><path d="M48 6.500q5.500-7.400 11 0-5.500 7.400-11 0z" fill="#f0f0f0"/><circle cx="53.500" cy="6.500" r="2.500" fill="#2d2d2d"/><circle cx="53.500" cy="6.500" r="1.200" fill="#f0f0f0"/></svg>
<div class="a" style="left:108px;top:396px;width:232px;height:75.500px;background:linear-gradient(#2690bc,#1f7ea8);border-right:1px solid #14384a"></div>
<div class="a" style="left:108px;top:437px;width:231px;height:1px;background:#62a6c0"></div>
<svg class="a" style="left:108px;top:438px" width="231" height="33" viewBox="108 438 231 33"><defs><linearGradient id="wg" x1="0" x2="0" y1="440" y2="467" gradientUnits="userSpaceOnUse"><stop offset="0" stop-color="#0d3a52" stop-opacity=".08"/><stop offset=".75" stop-color="#0d3a52" stop-opacity=".42"/><stop offset="1" stop-color="#0d3a52" stop-opacity=".5"/></linearGradient></defs><polygon points="108.7,455.2 109.7,454.7 110.8,453.9 111.8,453.5 112.8,451.6 113.9,451.3 114.9,446.3 115.9,446.9 117.0,447.6 118.0,444.9 119.0,444.6 120.1,440.2 121.1,442.2 122.1,441.5 123.2,443.2 124.2,443.7 125.2,441.6 126.3,442.9 127.3,450.4 128.3,464.6 129.4,459.5 130.4,453.0 131.5,455.5 132.5,452.3 133.5,454.1 134.6,451.6 135.6,450.7 136.6,454.0 137.7,447.4 138.7,443.8 139.7,445.3 140.8,448.4 141.8,449.5 142.8,450.8 143.9,446.4 144.9,444.4 145.9,441.6 147.0,448.6 148.0,451.2 149.0,454.3 150.1,448.1 151.1,444.3 152.1,447.7 153.2,449.9 154.2,452.9 155.2,450.2 156.3,448.6 157.3,447.4 158.3,444.5 159.4,451.3 160.4,453.6 161.5,456.7 162.5,460.5 163.5,460.6 164.6,460.8 165.6,461.8 166.6,463.0 167.7,460.4 168.7,464.7 169.7,460.7 170.8,464.2 171.8,464.8 172.8,461.4 173.9,465.1 174.9,463.5 175.9,464.6 177.0,462.4 178.0,462.8 179.0,463.6 180.1,466.9 181.1,463.9 182.1,466.5 183.2,466.9 184.2,466.9 185.2,465.0 186.3,465.2 187.3,466.0 188.3,465.9 189.4,461.4 190.4,462.6 191.5,461.3 192.5,458.7 193.5,451.8 194.6,452.6 195.6,445.6 196.6,445.1 197.7,444.8 198.7,444.6 199.7,440.5 200.8,449.6 201.8,452.6 202.8,447.3 203.9,443.1 204.9,439.4 205.9,439.7 207.0,441.0 208.0,444.4 209.0,446.8 210.1,444.6 211.1,446.4 212.1,452.8 213.2,453.1 214.2,454.8 215.2,456.4 216.3,460.2 217.3,462.8 218.3,460.2 219.4,459.2 220.4,456.7 221.5,459.8 222.5,455.2 223.5,456.6 224.6,457.5 225.6,453.8 226.6,455.8 227.7,457.4 228.7,457.2 229.7,459.0 230.8,457.1 231.8,459.7 232.8,458.0 233.9,460.6 234.9,457.7 235.9,456.7 237.0,455.3 238.0,450.9 239.0,447.6 240.1,447.6 241.1,451.5 242.1,455.1 243.2,451.2 244.2,447.6 245.2,445.2 246.3,446.2 247.3,450.2 248.3,455.9 249.4,456.9 250.4,452.0 251.5,448.0 252.5,443.8 253.5,442.4 254.6,444.0 255.6,447.2 256.6,448.4 257.7,447.1 258.7,450.1 259.7,451.3 260.8,452.1 261.8,453.2 262.8,454.1 263.9,450.1 264.9,449.3 265.9,445.2 267.0,445.0 268.0,446.0 269.0,445.4 270.1,443.3 271.1,445.9 272.1,444.3 273.2,445.3 274.2,444.8 275.2,449.3 276.3,449.9 277.3,452.8 278.3,452.9 279.4,455.5 280.4,456.6 281.5,459.9 282.5,460.5 283.5,460.8 284.6,458.4 285.6,456.0 286.6,450.3 287.7,448.3 288.7,444.2 289.7,442.1 290.8,445.3 291.8,447.1 292.8,446.8 293.9,446.5 294.9,444.5 295.9,447.2 297.0,447.3 298.0,446.4 299.0,448.8 300.1,450.4 301.1,451.9 302.1,450.6 303.2,452.1 304.2,449.9 305.2,449.1 306.3,448.4 307.3,451.2 308.3,453.8 309.4,455.1 310.4,455.0 311.5,451.3 312.5,451.3 313.5,451.9 314.6,452.6 315.6,452.1 316.6,455.5 317.7,456.7 318.7,455.4 319.7,456.2 320.8,453.8 321.8,451.7 322.8,450.7 323.9,452.2 324.9,452.7 325.9,453.8 327.0,454.3 328.0,457.9 329.0,459.3 330.1,459.9 331.1,456.6 332.1,451.9 333.2,453.4 334.2,451.4 335.2,455.2 336.3,457.8 337.3,465.2 338.5,467 108.5,467" fill="url(#wg)"/><polyline points="108.7,455.2 109.7,454.7 110.8,453.9 111.8,453.5 112.8,451.6 113.9,451.3 114.9,446.3 115.9,446.9 117.0,447.6 118.0,444.9 119.0,444.6 120.1,440.2 121.1,442.2 122.1,441.5 123.2,443.2 124.2,443.7 125.2,441.6 126.3,442.9 127.3,450.4 128.3,464.6 129.4,459.5 130.4,453.0 131.5,455.5 132.5,452.3 133.5,454.1 134.6,451.6 135.6,450.7 136.6,454.0 137.7,447.4 138.7,443.8 139.7,445.3 140.8,448.4 141.8,449.5 142.8,450.8 143.9,446.4 144.9,444.4 145.9,441.6 147.0,448.6 148.0,451.2 149.0,454.3 150.1,448.1 151.1,444.3 152.1,447.7 153.2,449.9 154.2,452.9 155.2,450.2 156.3,448.6 157.3,447.4 158.3,444.5 159.4,451.3 160.4,453.6 161.5,456.7 162.5,460.5 163.5,460.6 164.6,460.8 165.6,461.8 166.6,463.0 167.7,460.4 168.7,464.7 169.7,460.7 170.8,464.2 171.8,464.8 172.8,461.4 173.9,465.1 174.9,463.5 175.9,464.6 177.0,462.4 178.0,462.8 179.0,463.6 180.1,466.9 181.1,463.9 182.1,466.5 183.2,466.9 184.2,466.9 185.2,465.0 186.3,465.2 187.3,466.0 188.3,465.9 189.4,461.4 190.4,462.6 191.5,461.3 192.5,458.7 193.5,451.8 194.6,452.6 195.6,445.6 196.6,445.1 197.7,444.8 198.7,444.6 199.7,440.5 200.8,449.6 201.8,452.6 202.8,447.3 203.9,443.1 204.9,439.4 205.9,439.7 207.0,441.0 208.0,444.4 209.0,446.8 210.1,444.6 211.1,446.4 212.1,452.8 213.2,453.1 214.2,454.8 215.2,456.4 216.3,460.2 217.3,462.8 218.3,460.2 219.4,459.2 220.4,456.7 221.5,459.8 222.5,455.2 223.5,456.6 224.6,457.5 225.6,453.8 226.6,455.8 227.7,457.4 228.7,457.2 229.7,459.0 230.8,457.1 231.8,459.7 232.8,458.0 233.9,460.6 234.9,457.7 235.9,456.7 237.0,455.3 238.0,450.9 239.0,447.6 240.1,447.6 241.1,451.5 242.1,455.1 243.2,451.2 244.2,447.6 245.2,445.2 246.3,446.2 247.3,450.2 248.3,455.9 249.4,456.9 250.4,452.0 251.5,448.0 252.5,443.8 253.5,442.4 254.6,444.0 255.6,447.2 256.6,448.4 257.7,447.1 258.7,450.1 259.7,451.3 260.8,452.1 261.8,453.2 262.8,454.1 263.9,450.1 264.9,449.3 265.9,445.2 267.0,445.0 268.0,446.0 269.0,445.4 270.1,443.3 271.1,445.9 272.1,444.3 273.2,445.3 274.2,444.8 275.2,449.3 276.3,449.9 277.3,452.8 278.3,452.9 279.4,455.5 280.4,456.6 281.5,459.9 282.5,460.5 283.5,460.8 284.6,458.4 285.6,456.0 286.6,450.3 287.7,448.3 288.7,444.2 289.7,442.1 290.8,445.3 291.8,447.1 292.8,446.8 293.9,446.5 294.9,444.5 295.9,447.2 297.0,447.3 298.0,446.4 299.0,448.8 300.1,450.4 301.1,451.9 302.1,450.6 303.2,452.1 304.2,449.9 305.2,449.1 306.3,448.4 307.3,451.2 308.3,453.8 309.4,455.1 310.4,455.0 311.5,451.3 312.5,451.3 313.5,451.9 314.6,452.6 315.6,452.1 316.6,455.5 317.7,456.7 318.7,455.4 319.7,456.2 320.8,453.8 321.8,451.7 322.8,450.7 323.9,452.2 324.9,452.7 325.9,453.8 327.0,454.3 328.0,457.9 329.0,459.3 330.1,459.9 331.1,456.6 332.1,451.9 333.2,453.4 334.2,451.4 335.2,455.2 336.3,457.8 337.3,465.2" fill="none" stroke="#0f4359" stroke-width=".9" stroke-linejoin="round"/></svg>
<svg class="a" style="left:108px;top:396px" width="66" height="38" viewBox="108 396 66 38"><defs><filter id="tb1"><feGaussianBlur stdDeviation=".6"/></filter><clipPath id="tc1"><rect x="108" y="396" width="66" height="38"/></clipPath></defs><g clip-path="url(#tc1)"><g filter="url(#tb1)">
<rect x="106" y="394" width="70" height="42" fill="#2b2e46"/>
<rect x="109" y="400" width="10" height="22" fill="#3a4060"/><rect x="113" y="405" width="4" height="8" fill="#5d6486"/>
<rect x="132" y="396" width="18" height="38" fill="#3b332f"/>
<rect x="150" y="396" width="26" height="16" fill="#bfb4aa"/><circle cx="165" cy="403.500" r="2.200" fill="#3a3434"/>
<rect x="150" y="411" width="26" height="6" fill="#7b4f2b"/>
<rect x="157" y="416" width="19" height="10" fill="#8d8c8c"/>
<rect x="151" y="417" width="6.500" height="8" fill="#f3e4cc"/>
<path d="M128 434l8-6 16-3 12-2 12 2v9z" fill="#cbbcc6"/><path d="M160 424l8-2 8 2v7h-14z" fill="#e6e0e4"/>
<path d="M121 404q1-4 5-4 3 1 3 5l1 10-1 19h-6l-1-16z" fill="#23242c"/><circle cx="125.500" cy="401.500" r="2.300" fill="#1c1a1c"/>
<path d="M141 416q2-5 5-5 2 2 1 7l-1 7-5 1z" fill="#8f8078"/><circle cx="146" cy="407" r="2.400" fill="#2a2020"/><circle cx="143.500" cy="413" r="2" fill="#3a2a28"/>
<path d="M139 429q3-6 8-5l2 5z" fill="#a98878"/>
</g></g></svg>
<div class="a" style="left:174px;top:396px;width:165.500px;height:9px;background:#a9d3e2;overflow:hidden"><div class="t lab" style="left:1px;top:-1.8px">腾讯视频 - 中国领先的在线视频媒体平台,海量高清视频</div></div>
<div class="a" style="left:273px;top:405px;width:66.500px;height:29px;background:#fff"></div>
<div class="a" style="left:107px;top:471px;width:850px;height:2px;background:#0c0c0c"></div>
<div class="a" style="left:108px;top:473px;width:849px;height:35px;background:linear-gradient(#2690bc,#1f7ea8 120%)"></div>
<div class="a" style="left:174px;top:473px;width:269px;height:8.500px;background:#a9d3e2;overflow:hidden"><div class="t lab" style="left:1px;top:-2.1px">腾讯视频 - 中国领先的在线视频媒体平台,海量高清视频在线观看_2.ts</div></div>
<svg class="a" style="left:108px;top:473px" width="66" height="35" viewBox="108 473 66 35"><defs><filter id="tb2"><feGaussianBlur stdDeviation=".6"/></filter><clipPath id="tc2"><rect x="108" y="473" width="66" height="35"/></clipPath></defs><g clip-path="url(#tc2)"><g filter="url(#tb2)">
<rect x="106" y="471" width="70" height="40" fill="#2c4a2c"/>
<path d="M106 471h30l2 8-32 15z" fill="#d9c884"/>
<rect x="111" y="475.500" width="3.500" height="3.500" fill="#3a9ae8"/>
<path d="M132 473h9v6l-3 8h-4l1-7z" fill="#d0281c"/>
<rect x="108" y="500" width="22" height="10" fill="#2a3444"/><rect x="106" y="502" width="5" height="8" fill="#c82020"/>
<path d="M130 510q2-12 14-14l16-2 14 6v10z" fill="#3c4c5e"/>
<path d="M146 497l6 12h4l5-14-4-1-3 8-4-6z" fill="#c4222a"/>
<path d="M152 498l2 10 3-8z" fill="#e4c4b6"/>
<path d="M141 484q0-8 8-8 9 0 9 9 0 8-5 12-4 1-7-1-4-4-5-12z" fill="#e3c2b2"/>
<path d="M139 482q0-9 10-9.500 11-.5 12 8 .5 6-3 10l-1-5q-2-4-6-5-6 0-9 2z" fill="#1c1c1e"/>
<rect x="160" y="503" width="10" height="3" fill="#d8dcc8"/>
</g></g></svg>
<div class="a" style="left:106.500px;top:378px;width:1.300px;height:130px;background:#8e8e8e"></div>
<div class="a" style="left:957px;top:396px;width:12px;height:112px;background:#1e1e1e"></div>
<div class="a" style="left:959.500px;top:398px;width:8px;height:92px;background:#8c8c8c;border-radius:4px"></div>
<!--/TIMELINE-->
<div id="rw" class="a" style="left:969.5px;top:0;width:5px;height:508px;background:#fff"></div>
</body>
</html>
